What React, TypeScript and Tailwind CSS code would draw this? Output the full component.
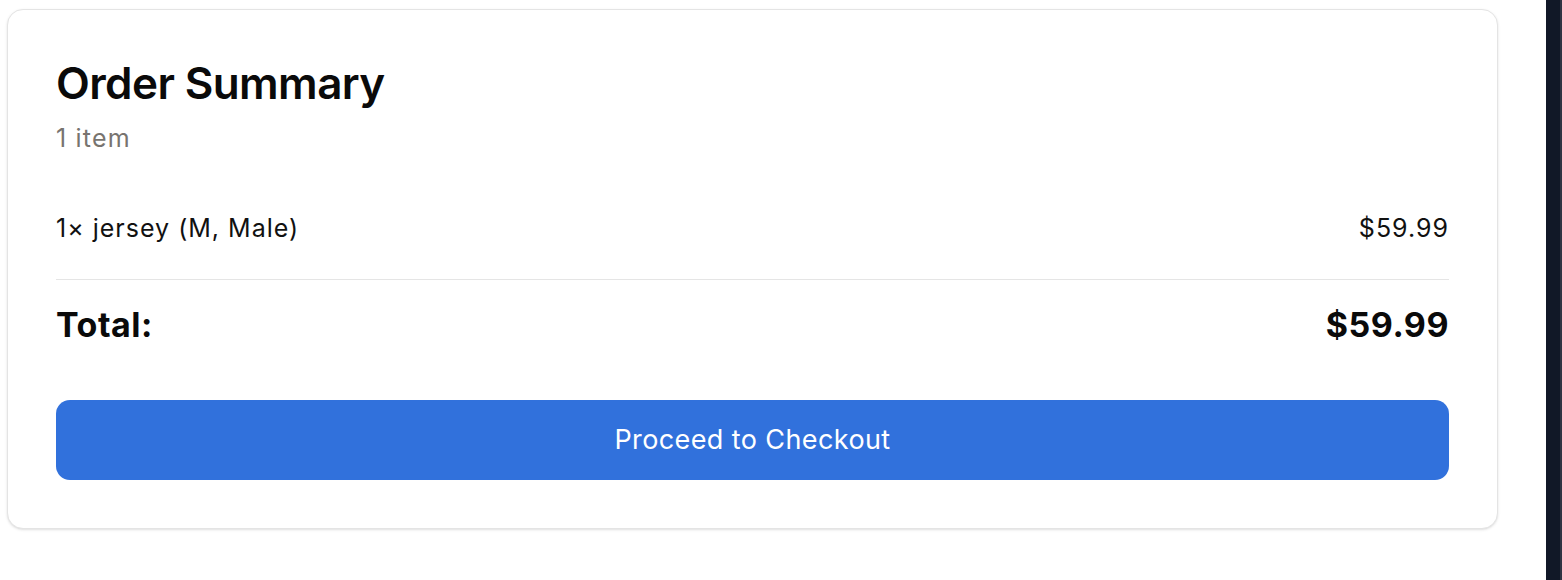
export default function App() {
  return (
    <div
      className="flex h-[580px] w-full justify-between bg-white"
      style={{ fontFamily: "Inter, 'Noto Sans', sans-serif" }}
    >
      <div className="pl-[7px] pt-[9px]">
        <div className="w-[1491px] rounded-2xl border border-[#e4e4e4] bg-white p-12 shadow-sm">
          <h2 className="text-[44px] font-semibold leading-[50px] tracking-[-0.6px] text-[#0a0a0a]">
            Order Summary
          </h2>
          <p className="mt-[14px] text-[25px] leading-[32px] tracking-[1.2px] text-[#78746f]">1 item</p>

          <div className="mt-[58px] flex items-center justify-between text-[25px] leading-[32px] tracking-[1px] text-[#111111]">
            <span>1× jersey (M, Male)</span>
            <span>$59.99</span>
          </div>

          <div className="mt-[35px] h-px bg-[#e5e5e5]" />

          <div className="mt-[25px] flex items-center justify-between text-[34px] font-bold leading-[40px] tracking-[0.5px] text-[#0a0a0a]">
            <span>Total:</span>
            <span>$59.99</span>
          </div>

          <button className="mt-[55px] flex h-[80px] w-full items-center justify-center rounded-[14px] bg-[#3171dc] text-[27px] tracking-[0.4px] text-white">
            Proceed to Checkout
          </button>
        </div>
      </div>
      <div className="flex h-full w-[16px] bg-[#111827]">
        <div className="ml-auto h-full w-[2px] bg-[#2f3342]" />
      </div>
    </div>
  );
}
